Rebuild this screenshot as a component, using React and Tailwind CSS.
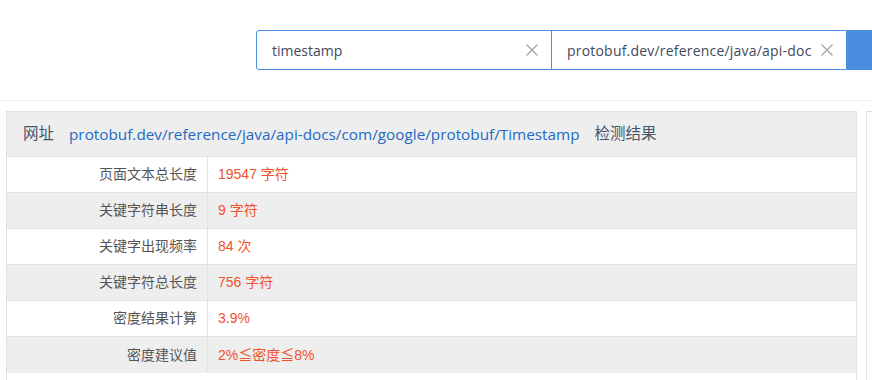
import React, { useState } from 'react';

const rows = [
  ['页面文本总长度', '19547 字符'],
  ['关键字符串长度', '9 字符'],
  ['关键字出现频率', '84 次'],
  ['关键字符总长度', '756 字符'],
  ['密度结果计算', '3.9%'],
  ['密度建议值', '2%≦密度≦8%'],
];

function ClearIcon() {
  return (
    <svg width="14" height="14" viewBox="0 0 14 14" className="shrink-0">
      <path d="M1.5 1.5 L12.5 12.5 M12.5 1.5 L1.5 12.5" stroke="#a0a0a0" strokeWidth="1.1" />
    </svg>
  );
}

function App() {
  const [keyword, setKeyword] = useState('timestamp');
  const [url, setUrl] = useState('protobuf.dev/reference/java/api-docs/com/google/protobuf/Timestamp');

  return (
    <div
      className="w-[872px] h-[380px] bg-white overflow-hidden"
      style={{ fontFamily: '"Liberation Sans", "Noto Sans CJK SC", sans-serif' }}
    >
      {/* search bar */}
      <div className="h-[101px] border-b border-[#f0f0f0] pt-[30px] pl-[256px] flex overflow-hidden">
        <div className="flex shrink-0 h-[40px] border border-[#4a90e2] rounded-l-[3px] overflow-hidden">
          <div className="w-[295px] flex items-center pl-[15px] pr-[12px] border-r border-[#4a90e2]">
            <input
              className="flex-1 min-w-0 outline-none text-[14px] text-[#3f4a5c] bg-transparent"
              style={{ fontFamily: '"Open Sans", sans-serif' }}
              value={keyword}
              onChange={(e) => setKeyword(e.target.value)}
            />
            <ClearIcon />
          </div>
          <div className="w-[294px] flex items-center pl-[15px] pr-[12px]">
            <input
              className="flex-1 min-w-0 outline-none text-[14px] text-[#3f4a5c] bg-transparent mr-[8px]"
              style={{ fontFamily: '"Open Sans", sans-serif', letterSpacing: '0.2px' }}
              value={url}
              onChange={(e) => setUrl(e.target.value)}
            />
            <ClearIcon />
          </div>
        </div>
        <button className="w-[80px] h-[40px] bg-[#4a8ee0] shrink-0" />
      </div>

      {/* result */}
      <div className="flex pt-[10px] pl-[6px] gap-[9px]">
        <div className="w-[851px] shrink-0 border border-[#e2e2e2]">
          <div
            className="h-[45px] bg-[#eeeeee] flex items-center pl-[16px] text-[15px] border-b border-[#e2e2e2]"
            style={{ fontFamily: '"Open Sans", "Noto Sans CJK SC", sans-serif' }}
          >
            <span className="text-[#4a5468] text-[15.5px]">网址</span>
            <span className="ml-[15px] text-[#1f6bc1] text-[15.3px]">{url}</span>
            <span className="ml-[15px] text-[#4a5468] text-[15.5px]">检测结果</span>
          </div>
          {rows.map(([label, value], i) => (
            <div
              key={label}
              className={
                'h-[36px] flex text-[14px] ' +
                (i % 2 === 1 ? 'bg-[#eeeeee] ' : 'bg-white ') +
                (i < rows.length - 1 ? 'border-b border-[#e2e2e2]' : '')
              }
            >
              <div className="w-[201px] flex items-center justify-end pr-[10px] text-[#555555] border-r border-[#e2e2e2]">
                {label}
              </div>
              <div className="flex-1 flex items-center pl-[10px] text-[#f0522c]">{value}</div>
            </div>
          ))}
        </div>
        <div className="flex-1 h-[280px] border-l border-t border-[#e2e2e2]" />
      </div>
    </div>
  );
}

export default App;
